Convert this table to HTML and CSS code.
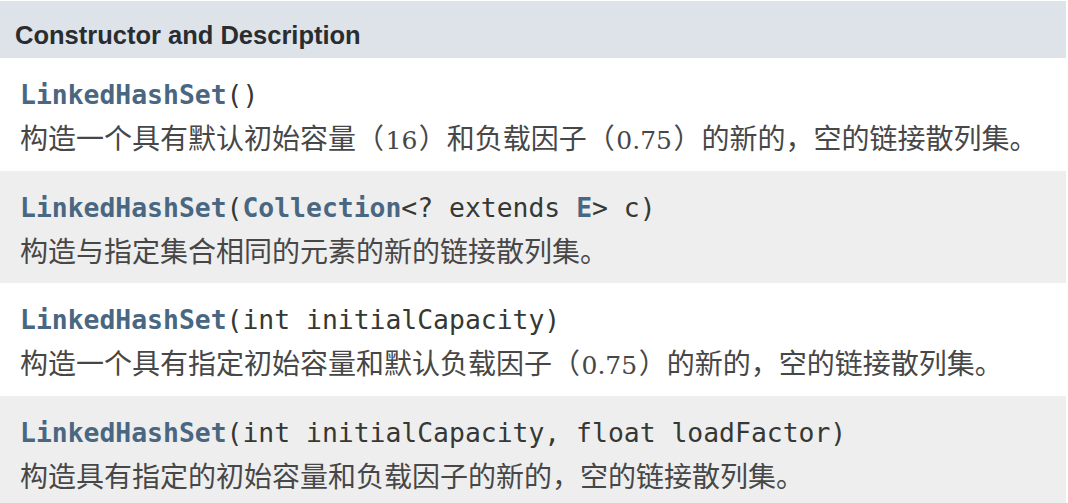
FILE: index.html
```html
<!DOCTYPE html>
<html>
<head>
    <link rel="stylesheet" href="styles.css">
</head>
<body>
    <table class="member-summary">
        <tr class="head">
            <th>Constructor and Description</th>
        </tr>
        <tr class="alt-white">
            <td>
                <div class="sig"><a class="link">LinkedHashSet</a>()</div>
                <div class="block">构造一个具有默认初始容量（<span class="num">16</span>）和负载因子（<span class="num">0.75</span>）的新的，空的链接散列集。</div>
            </td>
        </tr>
        <tr class="alt-gray">
            <td>
                <div class="sig"><a class="link">LinkedHashSet</a>(<a class="link">Collection</a>&lt;? extends <a class="link">E</a>&gt; c)</div>
                <div class="block">构造与指定集合相同的元素的新的链接散列集。</div>
            </td>
        </tr>
        <tr class="alt-white">
            <td>
                <div class="sig"><a class="link">LinkedHashSet</a>(int initialCapacity)</div>
                <div class="block">构造一个具有指定初始容量和默认负载因子（<span class="num">0.75</span>）的新的，空的链接散列集。</div>
            </td>
        </tr>
        <tr class="alt-gray">
            <td>
                <div class="sig"><a class="link">LinkedHashSet</a>(int initialCapacity, float loadFactor)</div>
                <div class="block">构造具有指定的初始容量和负载因子的新的，空的链接散列集。</div>
            </td>
        </tr>
    </table>
</body>
</html>
```

FILE: styles.css
```css
body {
    margin: 0;
    background-color: #fff;
    font-family: "Liberation Sans", Arial, sans-serif;
    color: #353833;
}

.member-summary {
    width: 1066px;
    border-collapse: collapse;
    border-spacing: 0;
    margin-top: 1px;
}

.head th {
    background-color: #dee3e9;
    padding: 19px 0 8px 15px;
    line-height: 30px;
    text-align: left;
    vertical-align: top;
    font-size: 25.5px;
    font-weight: bold;
    color: #2a2d30;
}

td {
    padding: 13px 0 15.5px 20px;
}

.alt-white td {
    background-color: #fff;
}

.alt-gray td {
    background-color: #eeeeef;
}

.sig {
    font-family: "DejaVu Sans Mono", "Liberation Mono", monospace;
    font-size: 26.4px;
    line-height: 48px;
    color: #353833;
    white-space: nowrap;
}

.link {
    color: #4a6782;
    font-weight: bold;
    text-decoration: none;
}

.block {
    font-family: "Noto Sans CJK SC", "Liberation Sans", sans-serif;
    font-size: 28px;
    line-height: 36px;
    color: #474747;
    white-space: nowrap;
}

.num {
    font-family: "DejaVu Serif", serif;
    font-size: 25px;
    line-height: 1;
    padding: 0 1.5px;
    color: #474747;
}
```
